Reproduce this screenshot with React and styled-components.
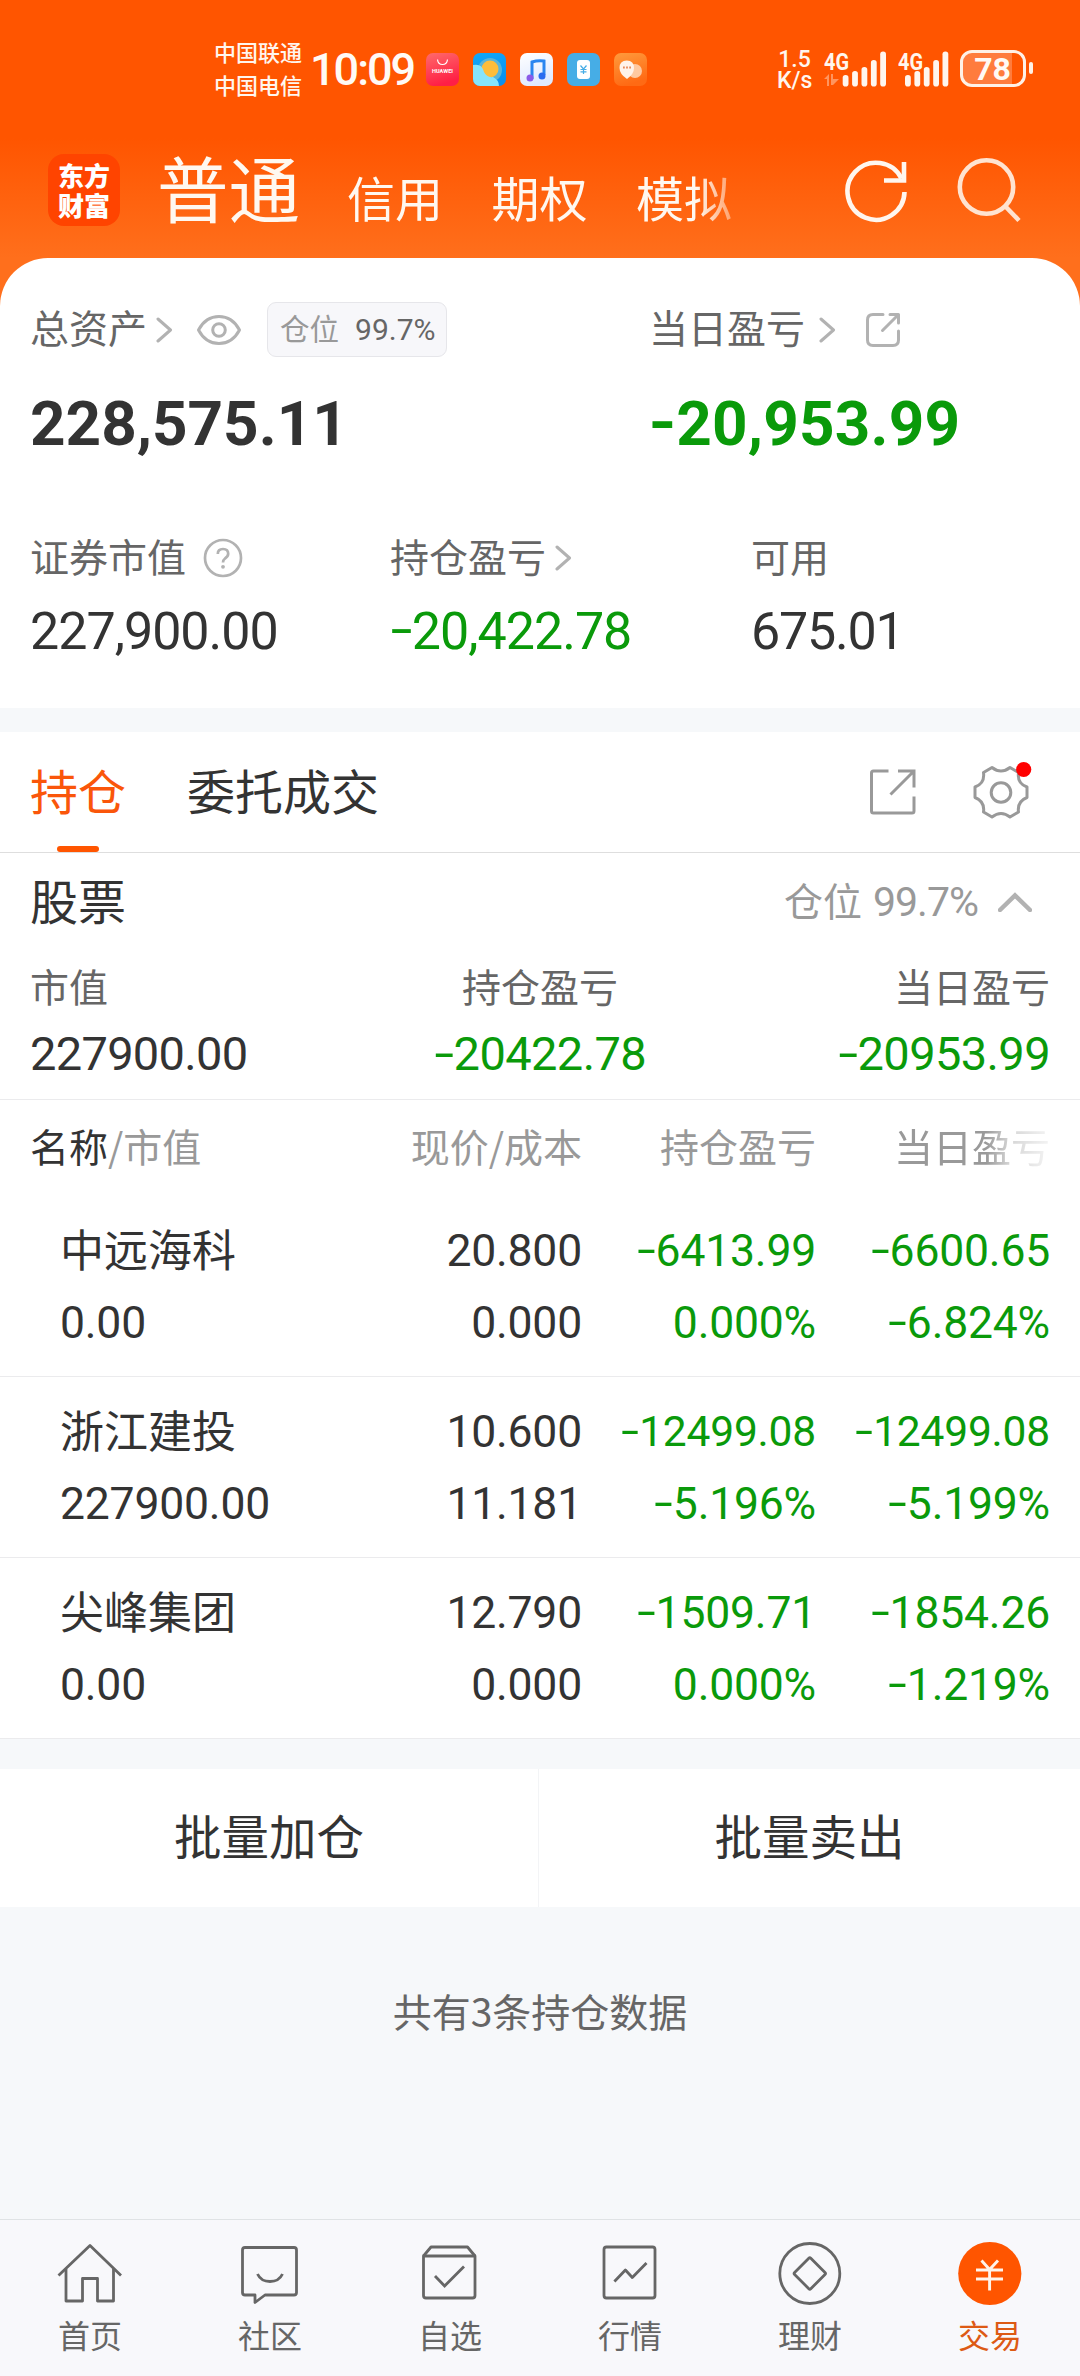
import React from "react";
import styled, { createGlobalStyle, css } from "styled-components";

const C = {
  brand: "#ff5500",
  ink: "#333333",
  sub: "#666666",
  mute: "#999999",
  icon: "#b2b2b2",
  green: "#0a9a0a",
  page: "#f6f8fa",
  line: "#ebebed",
};

const cjk = `"Noto Sans CJK SC", sans-serif`;
const latin = `Roboto, "Noto Sans CJK SC", sans-serif`;

const GlobalStyle = createGlobalStyle`
  * { box-sizing: border-box; }
  body { margin: 0; background: ${C.page}; font-family: ${cjk}; color: ${C.ink}; }
`;

const Screen = styled.div`
  width: 1080px;
  height: 2376px;
  display: flex;
  flex-direction: column;
  background: ${C.page};
  overflow: hidden;
`;

const Label = styled.span`
  display: block;
  font-family: ${cjk};
  font-size: ${(p) => p.$size || 39}px;
  font-weight: ${(p) => p.$weight || 400};
  line-height: 1;
  padding-bottom: 0.14em;
  white-space: nowrap;
  color: ${(p) => p.$color || C.sub};
  margin-left: ${(p) => p.$gap || 0}px;
`;

const Figure = styled.span`
  display: block;
  font-family: ${latin};
  font-size: ${(p) => p.$size}px;
  font-weight: ${(p) => (p.$bold ? 700 : 400)};
  line-height: 1;
  letter-spacing: ${(p) => p.$spacing || 0}px;
  white-space: nowrap;
  color: ${(p) => p.$color || C.ink};
  margin-left: ${(p) => p.$gap || 0}px;
`;

const Minus = styled.span`
  display: inline-block;
  width: ${(p) => (p.$bold ? 0.44 : 0.42)}em;
  text-align: center;
  transform: translateY(-0.03em) scaleX(${(p) => (p.$bold ? 1.15 : 1.5)});
`;

function Amount({ value, bold, color, ...rest }) {
  const negative = value.startsWith("-");
  return (
    <Figure $bold={bold} $color={negative ? C.green : color} {...rest}>
      {negative && <Minus $bold={bold}>-</Minus>}
      {negative ? value.slice(1) : value}
    </Figure>
  );
}

/* ---------- top area ---------- */

const Top = styled.div`
  background: linear-gradient(180deg, #ff5500 0, #ff5500 138px, #ff6f1c 258px, #ff6f1c 100%);
`;

const StatusBar = styled.div`
  height: 130px;
  padding: 35px 47px 0 214px;
  display: flex;
  align-items: flex-start;
  color: #fff6ee;
`;

const Carriers = styled.div`
  width: 96px;
  font-size: 22px;
  line-height: 33px;
  font-weight: 500;
  white-space: nowrap;
`;

const Clock = styled.div`
  width: 116px;
  padding-top: 12px;
  font-family: ${latin};
  font-size: 45px;
  font-weight: 500;
  line-height: 45px;
  letter-spacing: -2px;
  color: #fffaf5;
`;

const AppIcons = styled.div`
  display: flex;
  gap: 14px;
  padding-top: 18px;
  flex: 1;
  svg { display: block; }
`;

const Speed = styled.div`
  width: 47px;
  padding-top: 14px;
  font-family: ${latin};
  font-weight: 500;
  font-size: 23px;
  line-height: 21px;
  text-align: center;
  padding-right: 12px;
`;

const Signal = styled.div`
  width: ${(p) => p.$w}px;
  height: 50px;
  padding-top: 14px;
  svg { display: block; }
`;

const Battery = styled.div`
  width: 66px;
  height: 37px;
  margin-top: 15px;
  border: 3px solid #fff1e6;
  border-radius: 12px;
  background: linear-gradient(90deg, #ff7c3d 0, #ff7c3d 49px, transparent 49px);
  font-family: ${latin};
  font-weight: 700;
  font-size: 32px;
  line-height: 32px;
  text-align: center;
  color: #fffaf5;
  padding-right: 1px;
`;

const BatteryTip = styled.div`
  width: 4px;
  height: 12px;
  margin: 27px 0 0 3px;
  border-radius: 2px;
  background: #fff1e6;
`;

const NavBar = styled.div`
  height: 128px;
  padding: 0 48px;
  display: flex;
  align-items: flex-start;
`;

const Logo = styled.div`
  width: 72px;
  height: 72px;
  margin-top: 24px;
  padding: 6px 0 0 0;
  border-radius: 16px;
  background: #ff4400;
  color: #fff;
  font-size: 26px;
  font-weight: 900;
  line-height: 29.5px;
  text-align: center;
`;

const Accounts = styled.div`
  width: 625px;
  margin-left: 37px;
  display: flex;
  align-items: baseline;
  height: 128px;
  line-height: 112px;
  color: #fff8f0;
  white-space: nowrap;
  mask-image: linear-gradient(90deg, #000 540px, rgba(0, 0, 0, 0.45) 572px, transparent 610px);
`;

const Account = styled.span`
  font-size: ${(p) => (p.$active ? 71.5 : 48)}px;
  font-weight: 400;
  width: ${(p) => (p.$active ? 190 : 144.5)}px;
  flex: none;
`;

const NavIcons = styled.div`
  display: flex;
  gap: 48px;
  padding-top: 20px;
  margin-left: 61px;
  svg { display: block; flex: none; }
`;

const Summary = styled.section`
  height: 450px;
  background: #fff;
  border-radius: 48px 48px 0 0;
  padding: 44px 30px 0;
`;

const SummaryGrid = styled.div`
  display: grid;
  grid-template-columns: ${(p) => p.$cols};
  margin-top: ${(p) => p.$top || 0}px;
`;

const Line = styled.div`
  height: ${(p) => p.$h}px;
  margin-top: ${(p) => p.$top || 0}px;
  display: flex;
  align-items: center;
  svg { display: block; flex: none; margin-left: ${(p) => p.$iconGap || 0}px; }
`;

const Badge = styled.div`
  width: 180px;
  height: 55px;
  margin-left: 25px;
  padding: 0 0 0 12px;
  display: flex;
  align-items: center;
  border: 1px solid #e6e6ea;
  border-radius: 9px;
  background: #f7f7fa;
`;

/* ---------- positions ---------- */

const Band = styled.div`
  height: ${(p) => p.$h}px;
  background: ${C.page};
`;

const Panel = styled.section`
  background: #fff;
`;

const Tabs = styled.div`
  height: 121px;
  padding: 0 50px 0 30px;
  display: flex;
  align-items: stretch;
  border-bottom: 1px solid #dedede;
`;

const Tab = styled.div`
  display: flex;
  flex-direction: column;
  align-items: center;
  padding-top: 33px;
  margin-right: 61px;
`;

const TabMark = styled.i`
  width: 42px;
  height: 6px;
  margin-top: auto;
  border-radius: 3px;
  background: ${C.brand};
`;

const TabIcons = styled.div`
  margin-left: auto;
  padding-top: 30px;
  display: flex;
  gap: 54px;
  svg { display: block; overflow: visible; }
`;

const GroupHead = styled.div`
  height: 98px;
  padding: 0 48px 0 30px;
  display: flex;
  align-items: center;
  svg { display: block; margin-left: 20px; }
`;

const Spacer = styled.div`
  flex: 1;
`;

const Totals = styled.div`
  height: 149px;
  padding: 15px 30px 0;
  display: grid;
  grid-template-columns: 1fr 1fr 1fr;
  border-bottom: 1px solid ${C.line};
`;

const Total = styled.div`
  display: flex;
  flex-direction: column;
  gap: 20px;
  align-items: ${(p) => p.$align};
`;

const columns = css`
  display: grid;
  grid-template-columns: 292px 260px 234px 234px;
  padding-left: 30px;
`;

const TableHead = styled.div`
  ${columns}
  height: 96px;
  align-items: center;
`;

const HeadCell = styled.div`
  display: flex;
  justify-content: ${(p) => (p.$left ? "flex-start" : "flex-end")};
  ${(p) => p.$fade && "mask-image: linear-gradient(90deg, #000 170px, rgba(0,0,0,.4) 194px, rgba(0,0,0,.12) 232px);"}
`;

const Row = styled.div`
  ${columns}
  height: 181px;
  padding-top: 30px;
  border-bottom: 1px solid ${C.line};
`;

const Cell = styled.div`
  display: grid;
  grid-template-rows: 50px 50px;
  row-gap: 22px;
  align-items: center;
  justify-items: ${(p) => (p.$left ? "start" : "end")};
  align-content: start;
  padding-left: ${(p) => (p.$left ? 30 : 0)}px;
`;

const Actions = styled.div`
  display: grid;
  grid-template-columns: 539px 541px;
  height: 138px;
  background: #fff;
`;

const Action = styled.div`
  display: flex;
  align-items: center;
  justify-content: center;
  border-right: ${(p) => (p.$divided ? "1px solid #f3f4f6" : "0")};
`;

const Footnote = styled.div`
  flex: 1;
  padding-top: 84px;
  display: flex;
  justify-content: center;
  align-items: flex-start;
`;

const TabBar = styled.nav`
  height: 157px;
  display: grid;
  grid-template-columns: repeat(6, 180px);
  border-top: 1px solid #e0e3e5;
  background: #f8f8fb;
`;

const TabItem = styled.div`
  display: flex;
  flex-direction: column;
  align-items: center;
  padding-top: 18px;
  gap: 8px;
  svg { display: block; }
`;

/* ---------- icons ---------- */

const Svg = ({ w, h, color = C.icon, sw = 3, children, ...rest }) => (
  <svg width={w} height={h} viewBox={`0 0 ${w} ${h}`} fill="none" stroke={color} strokeWidth={sw} {...rest}>
    {children}
  </svg>
);

const Chevron = () => (
  <Svg w={17} h={26} strokeLinecap="round" strokeLinejoin="round">
    <path d="M2 2 L14.5 13 L2 24" />
  </Svg>
);

const Eye = () => (
  <Svg w={46} h={32}>
    <path d="M2.5 16 C12 -2 34 -2 43.5 16 C34 34 12 34 2.5 16 Z" strokeLinejoin="round" />
    <circle cx="23" cy="16" r="6.3" />
  </Svg>
);

const ShareSmall = () => (
  <Svg w={36} h={36} strokeLinecap="round" strokeLinejoin="round">
    <path d="M18 2.5 H8 Q2.5 2.5 2.5 8 V28 Q2.5 33.5 8 33.5 H28 Q33.5 33.5 33.5 28 V19" />
    <path d="M25 2.5 H33.5 V11 M33 3 L17.5 18.5" />
  </Svg>
);

const ShareLarge = () => (
  <Svg w={50} h={64} color={C.mute}>
    <path d="M20.5 9 H5.5 Q3.5 9 3.5 11 V49 Q3.5 51 5.5 51 H44 Q46 51 46 49 V34.5" />
    <path d="M30 9 H46 V25.5 M45 10 L22.5 32.5" />
  </Svg>
);

const Question = () => (
  <Svg w={40} h={40} sw={2.7}>
    <circle cx="20" cy="20" r="18" />
    <path d="M14.8 16 Q14.8 11 20 11 Q25.2 11 25.2 15.8 Q25.2 18.5 22 20.5 Q20 22 20 24.6" />
    <circle cx="20" cy="28.8" r="1.9" fill={C.icon} stroke="none" />
  </Svg>
);

const Gear = () => (
  <Svg w={58} h={64} color={C.mute} strokeLinejoin="round">
    <path d="M11.5 10.5 L20 5.5 Q29 12.5 38 5.5 L46.5 10.5 Q45 21.5 55 25 V35.5 Q45 39.5 46.5 50 L38 55 Q29 48 20 55 L11.5 50 Q13 39.5 3 35.5 V25 Q13 21.5 11.5 10.5 Z" />
    <circle cx="29" cy="30.5" r="9.8" />
    <circle cx="51.7" cy="7.5" r="7.6" fill="#ff0000" stroke="none" />
  </Svg>
);

const ChevronUp = () => (
  <Svg w={34} h={20} sw={4.5}>
    <path d="M2 18 L17 3.5 L32 18" strokeLinecap="round" />
  </Svg>
);

const Refresh = () => (
  <Svg w={66} h={76} color="#fff6ee" sw={4.6}>
    <path d="M61.5 42 A28.5 28.5 0 1 1 58.5 28.5" />
    <path d="M61 12 V32.5 M41 30.5 H63.3" />
  </Svg>
);

const Search = () => (
  <Svg w={70} h={76} color="#ffe3d0" sw={4.6}>
    <circle cx="29.5" cy="37" r="26.7" />
    <path d="M48 56 L62 70.5" />
  </Svg>
);

const bars = [
  [75, 0],
  [71, 9.4],
  [67, 18.8],
  [60, 28.2],
  [51.5, 37.5],
];

function SignalIcon({ width, offset, arrows }) {
  return (
    <svg width={width} height="38" viewBox={`0 49 ${width} 38`} fill="#fff6ee">
      <text x="0" y="69.5" fontFamily="Roboto, sans-serif" fontWeight="700" fontSize="23" textLength="25" lengthAdjust="spacingAndGlyphs">
        4G
      </text>
      {arrows && <path opacity="0.4" d="M0 79 L5 74 V86 H3 V79 Z M7 74 H9 V79 H15 L9 85 L7 85 Z" />}
      {bars.map(([top, x]) => (
        <rect key={x} x={offset + x} y={top} width="5.8" height={86.5 - top} rx="2.8" />
      ))}
    </svg>
  );
}

const AppTile = ({ fill, id, from, to, children }) => (
  <svg width="33" height="33" viewBox="0 0 33 33">
    <defs>
      <linearGradient id={id} x1="0" y1="0" x2="0.3" y2="1">
        <stop offset="0" stopColor={from} />
        <stop offset="1" stopColor={to} />
      </linearGradient>
      <clipPath id={`${id}-clip`}>
        <rect width="33" height="33" rx="7" />
      </clipPath>
    </defs>
    <g clipPath={`url(#${id}-clip)`}>
      <rect width="33" height="33" fill={fill || `url(#${id})`} />
      {children}
    </g>
  </svg>
);

const navIcon = (children) => (
  <Svg w={72} h={72} color={C.sub} sw={2.8} strokeLinejoin="round">
    {children}
  </Svg>
);

const tabItems = [
  {
    name: "首页",
    icon: navIcon(
      <>
        <path d="M4.5 37.5 L36 7.5 L67 37.5" />
        <path d="M12 31 V63 H28.5 V40.5 H43.5 V63 H59.5 V31" />
      </>
    ),
  },
  {
    name: "社区",
    icon: navIcon(
      <>
        <path d="M11 9.5 H60 Q62.5 9.5 62.5 12 V54.5 Q62.5 57 60 57 H31 L21 64.5 V57 H11 Q8.5 57 8.5 54.5 V12 Q8.5 9.5 11 9.5 Z" />
        <path d="M23.5 36 Q27 43.5 36 43.5 Q45 43.5 48.5 36" />
      </>
    ),
  },
  {
    name: "自选",
    icon: navIcon(
      <>
        <path d="M9.5 18 H61 V57.5 Q61 60 58.5 60 H12 Q9.5 60 9.5 57.5 Z" />
        <path d="M9.5 18 L17 9 H53.5 L61 18" />
        <path d="M21 38 L30.6 48 L50 28.5" strokeLinejoin="miter" />
      </>
    ),
  },
  {
    name: "行情",
    icon: navIcon(
      <>
        <rect x="10" y="9" width="51" height="51" rx="2.5" />
        <path d="M20.4 43.5 L31.4 32 L38.3 39.5 L52.5 25" />
      </>
    ),
  },
  {
    name: "理财",
    icon: navIcon(
      <>
        <circle cx="35.8" cy="35.5" r="30" />
        <path d="M34.8 20.3 Q35.8 19.3 36.8 20.3 L51 34.5 Q52 35.5 51 36.5 L36.8 50.7 Q35.8 51.7 34.8 50.7 L20.6 36.5 Q19.6 35.5 20.6 34.5 Z" />
      </>
    ),
  },
  {
    name: "交易",
    active: true,
    icon: (
      <Svg w={72} h={72} color="#fff3ea" sw={2.9}>
        <circle cx="35.8" cy="35.5" r="31.6" fill={C.brand} stroke="none" />
        <path d="M27.5 22.5 L35.6 31.5 L44 22.5 M22 32 H49 M22 41 H49 M35.6 31 V52.5" />
      </Svg>
    ),
  },
];

const holdings = [
  ["中远海科", "0.00", "20.800", "0.000", "-6413.99", "0.000%", "-6600.65", "-6.824%"],
  ["浙江建投", "227900.00", "10.600", "11.181", "-12499.08", "-5.196%", "-12499.08", "-5.199%"],
  ["尖峰集团", "0.00", "12.790", "0.000", "-1509.71", "0.000%", "-1854.26", "-1.219%"],
];

const longValue = (value) => value.startsWith("-") && value.length > 8;

function PnlCell({ top, bottom }) {
  return (
    <Cell>
      <Amount value={top} color={C.green} $size={longValue(top) ? 42.5 : 44.5} $spacing={-0.2} />
      <Amount value={bottom} color={C.green} $size={44.5} $spacing={-0.2} />
    </Cell>
  );
}

export default function App() {
  return (
    <Screen>
      <GlobalStyle />
      <Top>
        <StatusBar>
          <Carriers>
            中国联通
            <br />
            中国电信
          </Carriers>
          <Clock>10:09</Clock>
          <AppIcons>
            <AppTile id="store" from="#ff6a6a" to="#ff1f45">
              <path d="M11.5 6.5 Q12 11.5 16.5 11.5 Q21 11.5 21.5 6.5" fill="none" stroke="#fff" strokeWidth="1.2" />
              <text x="16.5" y="20" textAnchor="middle" fontFamily="Roboto, sans-serif" fontWeight="700" fontSize="5.6" fill="#fff">
                HUAWEI
              </text>
            </AppTile>
            <AppTile id="weather" from="#12a8f8" to="#0a90ee">
              <circle cx="17" cy="17" r="12" fill="#58b4d8" />
              <circle cx="17" cy="16" r="8.5" fill="#fdbd3a" />
              <path d="M0 12 Q9 10 11 19 Q14 25 20 24 Q26 27 26 33 H0 Z" fill="#86e4fb" />
            </AppTile>
            <AppTile id="music" from="#ffffff" to="#dfeaff">
              <path d="M12 26 V9 Q18 7 24 8 V22" fill="none" stroke="#2a86f0" strokeWidth="3" />
              <circle cx="10" cy="25" r="3.5" fill="#8a5be8" />
              <circle cx="22" cy="23" r="3.5" fill="#2a6cf0" />
            </AppTile>
            <AppTile id="pay" fill="#46ade6">
              <rect x="10" y="7" width="13" height="19" rx="3" fill="#fff" />
              <path d="M13.5 12.5 L16.5 16 L19.5 12.5 M16.5 16 V21 M13.5 16.5 H19.5 M13.5 18.8 H19.5" stroke="#46ade6" strokeWidth="1.2" fill="none" />
            </AppTile>
            <AppTile id="chat" from="#ff9a3c" to="#ff6a14">
              <circle cx="21" cy="18" r="7" fill="#ffc9a0" />
              <path d="M5.5 15 Q5.5 7.5 12.8 7.5 Q20 7.5 20 15 Q20 21 13 26 Q5.5 21 5.5 15 Z" fill="#fff3ea" />
              <path d="M9 14.5 H17" stroke="#e88a5a" strokeWidth="2" strokeDasharray="1.8 1.3" />
            </AppTile>
          </AppIcons>
          <Speed>
            1.5
            <br />
            K/s
          </Speed>
          <Signal $w={74}>
            <SignalIcon width={63} offset={18.7} arrows />
          </Signal>
          <Signal $w={62}>
            <SignalIcon width={52} offset={7} />
          </Signal>
          <Battery>78</Battery>
          <BatteryTip />
        </StatusBar>
        <NavBar>
          <Logo>
            东方
            <br />
            财富
          </Logo>
          <Accounts>
            <Account $active>普通</Account>
            <Account>信用</Account>
            <Account>期权</Account>
            <Account>模拟</Account>
          </Accounts>
          <NavIcons>
            <Refresh />
            <Search />
          </NavIcons>
        </NavBar>
        <Summary>
          <SummaryGrid $cols="619px 1fr">
            <div>
              <Line $h={55}>
                <Label>总资产</Label>
                <Line $h={26} $iconGap={9}>
                  <Chevron />
                </Line>
                <Line $h={32} $iconGap={23}>
                  <Eye />
                </Line>
                <Badge>
                  <Label $size={29.5} $color={C.mute}>
                    仓位
                  </Label>
                  <Amount value="99.7%" color={C.sub} $size={30} $gap={16} />
                </Badge>
              </Line>
              <Line $h={60} $top={37}>
                <Amount value="228,575.11" bold $size={62} />
              </Line>
            </div>
            <div>
              <Line $h={55}>
                <Label>当日盈亏</Label>
                <Line $h={26} $iconGap={14}>
                  <Chevron />
                </Line>
                <Line $h={36} $iconGap={29}>
                  <ShareSmall />
                </Line>
              </Line>
              <Line $h={60} $top={37}>
                <Amount value="-20,953.99" bold $size={62} $spacing={0.2} />
              </Line>
            </div>
          </SummaryGrid>
          <SummaryGrid $cols="360px 361px 1fr" $top={77}>
            <div>
              <Line $h={54} $iconGap={17}>
                <Label>证券市值</Label>
                <Question />
              </Line>
              <Line $h={52} $top={21}>
                <Amount value="227,900.00" $size={52} $spacing={-1} />
              </Line>
            </div>
            <div>
              <Line $h={54} $iconGap={9}>
                <Label>持仓盈亏</Label>
                <Chevron />
              </Line>
              <Line $h={52} $top={21}>
                <Amount value="-20,422.78" $size={52} $spacing={-1} />
              </Line>
            </div>
            <div>
              <Line $h={54}>
                <Label>可用</Label>
              </Line>
              <Line $h={52} $top={21}>
                <Amount value="675.01" $size={52} $spacing={-1.2} />
              </Line>
            </div>
          </SummaryGrid>
        </Summary>
      </Top>

      <Band $h={24} />

      <Panel>
        <Tabs>
          <Tab>
            <Label $size={48} $color="#fa560a">
              持仓
            </Label>
            <TabMark />
          </Tab>
          <Tab>
            <Label $size={48} $color={C.ink}>
              委托成交
            </Label>
          </Tab>
          <TabIcons>
            <ShareLarge />
            <Gear />
          </TabIcons>
        </Tabs>
        <GroupHead>
          <Label $size={48} $color={C.ink}>
            股票
          </Label>
          <Spacer />
          <Label $color={C.mute}>仓位</Label>
          <Amount value="99.7%" color={C.mute} $size={41} $spacing={-1} $gap={11} />
          <ChevronUp />
        </GroupHead>
        <Totals>
          <Total $align="flex-start">
            <Label>市值</Label>
            <Amount value="227900.00" $size={47} $spacing={-0.7} />
          </Total>
          <Total $align="center">
            <Label>持仓盈亏</Label>
            <Amount value="-20422.78" $size={47} $spacing={-0.6} />
          </Total>
          <Total $align="flex-end">
            <Label>当日盈亏</Label>
            <Amount value="-20953.99" $size={47} $spacing={-0.6} />
          </Total>
        </Totals>
        <TableHead>
          <HeadCell $left>
            <Label $color={C.ink}>名称</Label>
            <Label $color={C.mute}>/市值</Label>
          </HeadCell>
          <HeadCell>
            <Label $color={C.mute}>现价/成本</Label>
          </HeadCell>
          <HeadCell>
            <Label $color={C.mute}>持仓盈亏</Label>
          </HeadCell>
          <HeadCell $fade>
            <Label $color={C.mute}>当日盈亏</Label>
          </HeadCell>
        </TableHead>
        {holdings.map(([name, worth, price, cost, pnl, pnlPct, day, dayPct]) => (
          <Row key={name}>
            <Cell $left>
              <Label $size={44} $color={C.ink}>
                {name}
              </Label>
              <Amount value={worth} $size={44.5} $spacing={-0.2} />
            </Cell>
            <Cell>
              <Amount value={price} $size={44.5} $spacing={-0.2} />
              <Amount value={cost} $size={44.5} $spacing={-0.2} />
            </Cell>
            <PnlCell top={pnl} bottom={pnlPct} />
            <PnlCell top={day} bottom={dayPct} />
          </Row>
        ))}
      </Panel>

      <Band $h={30} />

      <Actions>
        <Action $divided>
          <Label $size={47.5} $color={C.ink}>
            批量加仓
          </Label>
        </Action>
        <Action>
          <Label $size={47.5} $color={C.ink}>
            批量卖出
          </Label>
        </Action>
      </Actions>

      <Footnote>
        <Label>共有3条持仓数据</Label>
      </Footnote>

      <TabBar>
        {tabItems.map((item) => (
          <TabItem key={item.name}>
            {item.icon}
            <Label $size={32} $color={item.active ? "#dd5a14" : C.sub}>
              {item.name}
            </Label>
          </TabItem>
        ))}
      </TabBar>
    </Screen>
  );
}
